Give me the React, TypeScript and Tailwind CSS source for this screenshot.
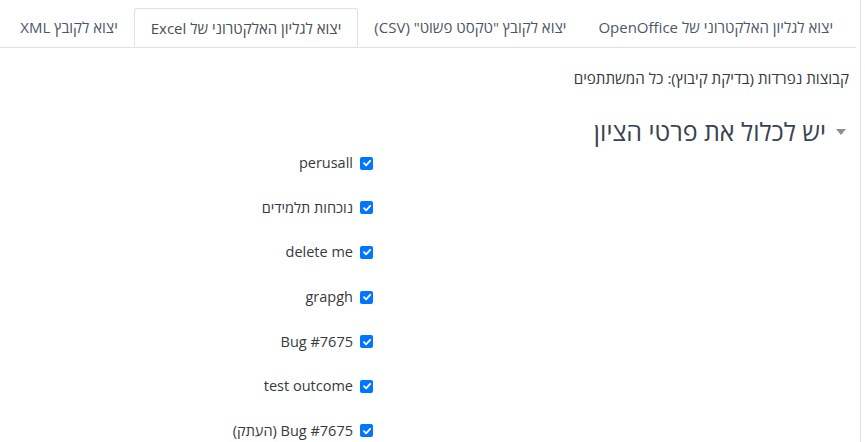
import React from "react";

const tabs = [
  { label: "יצוא לגליון האלקטרוני של OpenOffice", active: false },
  { label: 'יצוא לקובץ "טקסט פשוט" (CSV)', active: false },
  { label: "יצוא לגליון האלקטרוני של Excel", active: true },
  { label: "יצוא לקובץ XML", active: false },
];

const items = [
  "perusall",
  "נוכחות תלמידים",
  "delete me",
  "grapgh",
  "Bug #7675",
  "test outcome",
  "Bug #7675 (העתק)",
];

function Check() {
  return (
    <span className="inline-flex h-[13px] w-[13px] shrink-0 items-center justify-center rounded-[2px] bg-[#0075ff]">
      <svg width="10" height="10" viewBox="0 0 10 10">
        <path d="M2 5.2 L4.1 7.3 L8.2 2.8" stroke="white" strokeWidth="1.8" fill="none" strokeLinecap="round" strokeLinejoin="round" />
      </svg>
    </span>
  );
}

export default function App() {
  return (
    <div
      dir="rtl"
      className="flex h-[442px] w-[865px] overflow-hidden bg-white text-[#1d2125]"
      style={{ fontFamily: '"Open Sans", "Liberation Sans", sans-serif' }}
    >
      <div className="w-[1px] shrink-0 bg-[#dee2e6] ml-[4px] mr-[4px]" />
      <div className="flex w-[856px] flex-col">
        <ul className="mt-[8px] flex border-b border-[#dee2e6] pr-[7px]">
          {tabs.map((t) => (
            <li
              key={t.label}
              className={
                "h-[39px] whitespace-nowrap px-[16px] pt-[9px] text-[15px] leading-[20px] " +
                (t.active
                  ? "-mb-[1px] rounded-t-[3px] border border-b-white border-[#dee2e6] bg-white pt-[8px] px-[16px] text-[#495057]"
                  : "text-[#4b5766]")
              }
            >
              {t.label}
            </li>
          ))}
        </ul>
        <div className="pr-[7px] pt-[20px] text-[15.2px] leading-[20px] text-[#343a40]">
          קבוצות נפרדות (בדיקת קיבוץ): כל המשתתפים
        </div>
        <div className="mt-[28px] flex items-center gap-[10px] pr-[10px]">
          <svg width="10" height="6" viewBox="0 0 10 6" className="mt-[1px]">
            <path d="M0 0 H10 L5 6 Z" fill="#8a9096" />
          </svg>
          <span className="text-[25px] leading-[30px] text-[#374352]">יש לכלול את פרטי הציון</span>
        </div>
        <div className="-mt-[5px] flex flex-col pr-[483px]">
          {items.map((it) => (
            <div key={it} className="flex h-[44.6px] shrink-0 items-center gap-[7px]">
              <Check />
              <span className="whitespace-nowrap text-[14.5px] leading-[20px] text-[#343a40]">{it}</span>
            </div>
          ))}
        </div>
      </div>
    </div>
  );
}
